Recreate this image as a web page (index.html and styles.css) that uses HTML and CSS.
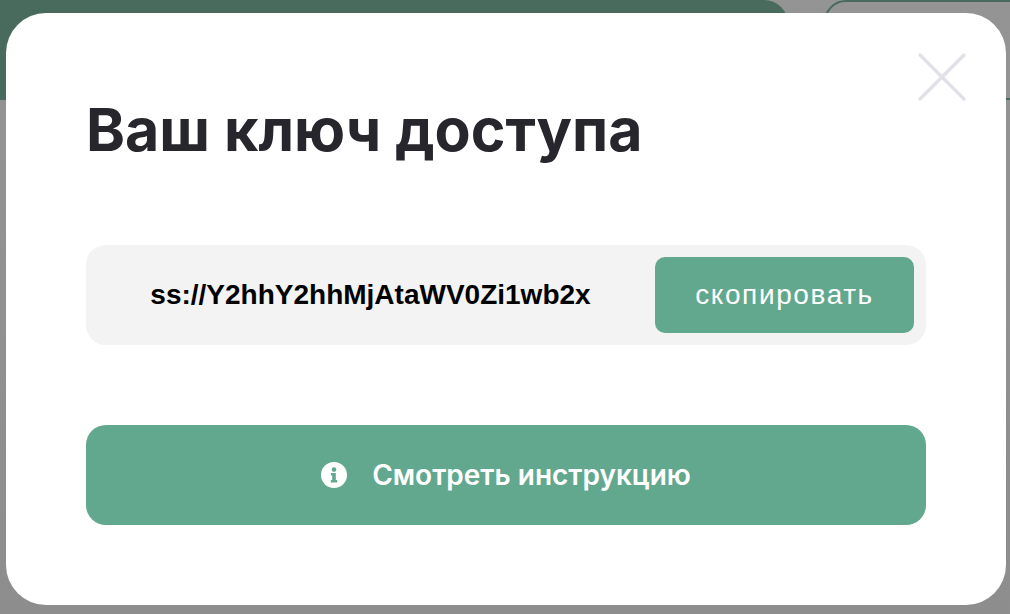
FILE: index.html
```html
<!DOCTYPE html>
<html lang="ru">
<head>
<meta charset="utf-8">
<title>Ваш ключ доступа</title>
<link rel="stylesheet" href="styles.css">
</head>
<body>
<div class="backdrop">
  <div class="bg-fill"></div>
  <div class="bg-outline"></div>
</div>
<main class="modal">
  <button class="close" aria-label="Закрыть">
    <svg width="50" height="50" viewBox="0 0 50 50"><path d="M3 3 47 47M47 3 3 47" fill="none" stroke="#e1e1e8" stroke-width="3.4" stroke-linecap="round"/></svg>
  </button>
  <h1 class="title">Ваш ключ доступа</h1>
  <div class="key-row">
    <span class="key">ss://Y2hhY2hhMjAtaWV0Zi1wb2x</span>
    <button class="copy">скопировать</button>
  </div>
  <button class="guide">
    <svg width="26" height="26" viewBox="0 0 26 26"><circle cx="13" cy="13" r="13" fill="#fff"/><circle cx="13" cy="7.6" r="2.3" fill="#62a88f"/><path d="M10 11h4.8v7h1.4v2.4H9.8V18h1.4v-4.6H10z" fill="#62a88f"/></svg>
    <span>Смотреть инструкцию</span>
  </button>
</main>
</body>
</html>
```
FILE: styles.css
```css
* { box-sizing: border-box; }
html, body { margin: 0; height: 100%; }
body {
  width: 1010px;
  height: 614px;
  overflow: hidden;
  background: linear-gradient(#949495, #8d8d8d);
  font-family: "Inter", "Liberation Sans", sans-serif;
  padding: 13px 4px 9px 6px;
}
.backdrop { position: absolute; inset: 0; overflow: hidden; }
.bg-fill {
  position: absolute; left: -40px; top: 0; width: 828px; height: 100px;
  background: #486b5e; border-radius: 0 24px 0 0;
}
.bg-outline {
  position: absolute; left: 824px; top: 0; width: 300px; height: 100px;
  border: 2px solid #486b5e; border-radius: 22px 0 0 0;
}
.modal {
  position: relative;
  width: 1000px;
  height: 592px;
  background: #fff;
  border-radius: 40px;
  padding: 87px 80px 0;
}
.close {
  position: absolute; top: 39px; right: 39px;
  width: 50px; height: 50px; padding: 0;
  border: 0; background: none; display: block;
}
.close svg { display: block; }
.title {
  margin: 0;
  font-size: 59px;
  line-height: 60px;
  font-weight: 700;
  color: #26262c;
  letter-spacing: 0;
}
.key-row {
  margin-top: 85px;
  height: 100px;
  background: #f3f3f3;
  border-radius: 20px;
  display: flex;
  align-items: center;
  padding: 0 12px 0 0;
}
.key {
  flex: 1;
  text-align: center;
  font-family: "Liberation Sans", sans-serif;
  font-weight: 700;
  font-size: 28px;
  color: #000;
}
.copy {
  width: 259px; height: 76px;
  border: 0; border-radius: 10px;
  background: #62a88f; color: #fff;
  font-family: "Liberation Sans", sans-serif;
  font-size: 28px;
  letter-spacing: 1.6px;
}
.guide {
  margin-top: 80px;
  width: 840px; height: 100px;
  border: 0; border-radius: 20px;
  background: #62a88f; color: #fff;
  display: flex; align-items: center; justify-content: center; gap: 25px;
  font-family: "Inter", "Liberation Sans", sans-serif;
  font-weight: 600;
  font-size: 28px;
}
.guide svg { display: block; flex: none; }
```
